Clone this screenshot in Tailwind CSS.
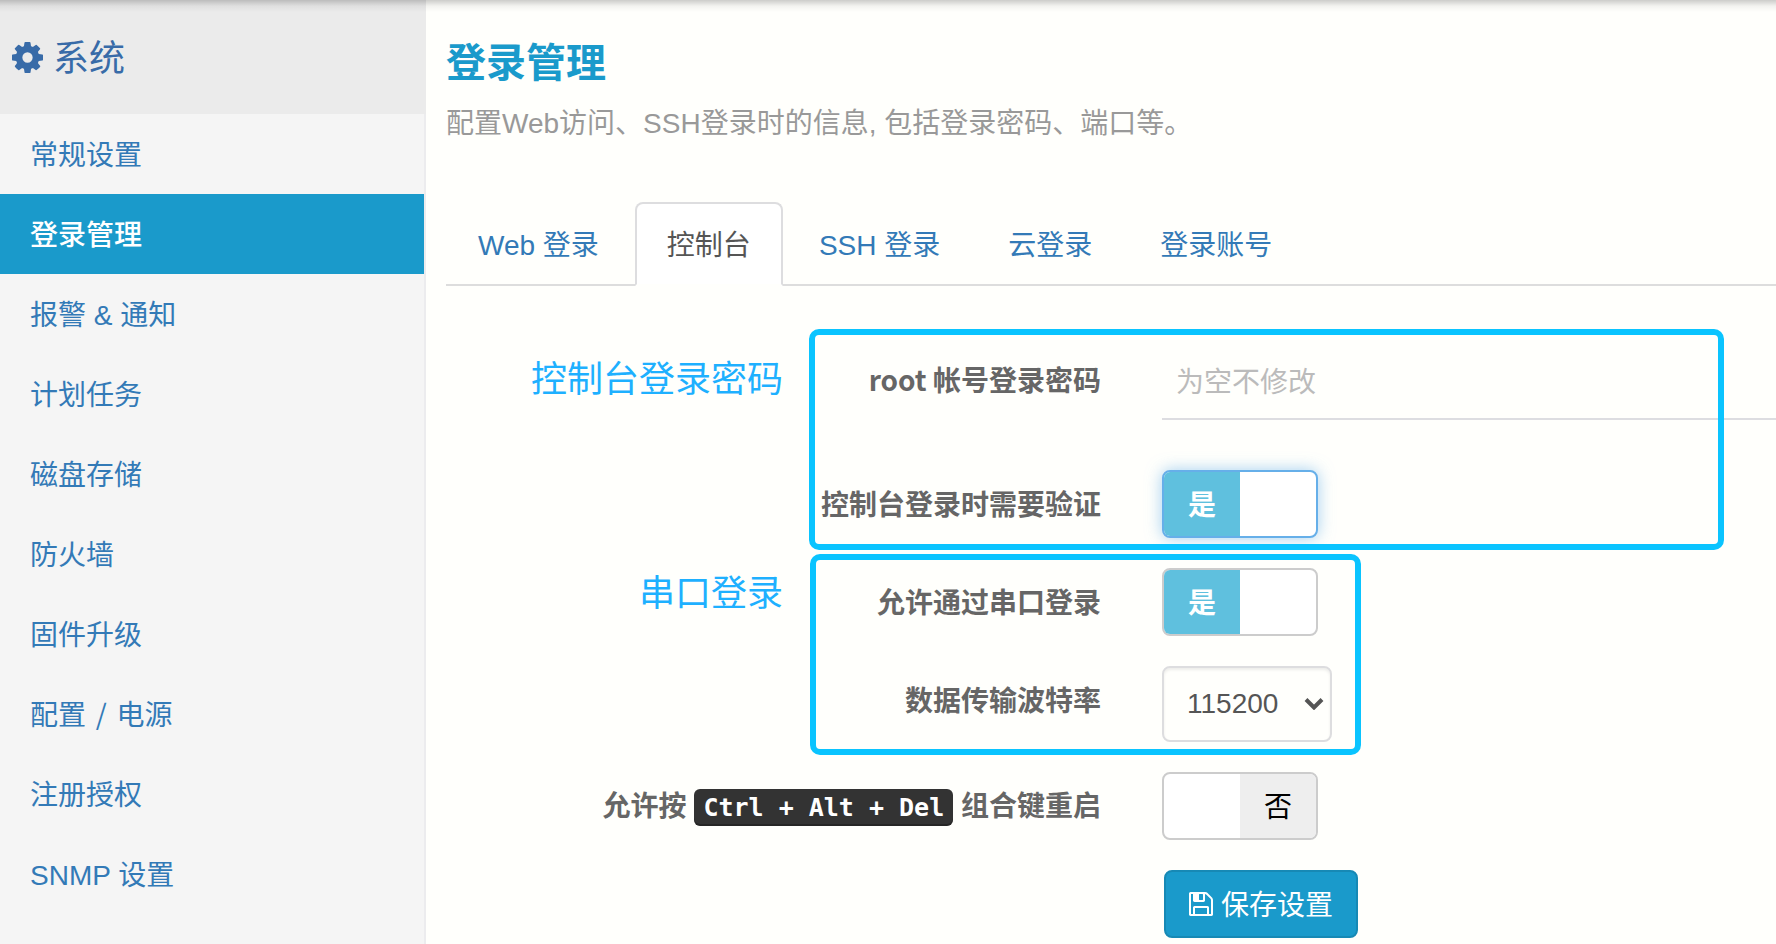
<!DOCTYPE html>
<html lang="zh-CN">
<head>
<meta charset="utf-8">
<title>登录管理</title>
<script src="https://cdn.jsdelivr.net/npm/@tailwindcss/browser@4"></script>
</head>
<body class="relative flex min-h-screen overflow-x-hidden bg-[#fffffc] font-['Liberation_Sans','Noto_Sans_CJK_SC',sans-serif] text-[28px] leading-10 text-[#555]">
<div class="pointer-events-none absolute inset-x-0 top-0 z-10 h-3 bg-linear-to-b from-black/20 via-black/5 to-transparent"></div>

<aside class="w-[426px] shrink-0 border-r-2 border-[#ececee] bg-[#f5f5f5]">
  <h2 class="-mr-0.5 flex h-[114px] items-center gap-2.5 bg-[#ebebeb] pl-3 text-4xl text-[#386ba8]">
    <svg class="size-[31px] fill-current" viewBox="0 -128 1536 1536" aria-hidden="true"><path d="M1024 640q0-106-75-181t-181-75-181 75-75 181 75 181 181 75 181-75 75-181zm512-109v222q0 12-8 23t-20 13l-185 28q-19 54-39 91 35 50 107 138 10 12 10 25t-9 23q-27 37-99 108t-94 71q-12 0-26-9l-138-108q-44 23-91 38-16 136-29 186-7 28-36 28h-222q-14 0-24.500-8.500t-11.500-21.500l-28-184q-49-16-90-37l-141 107q-10 9-25 9-14 0-25-11-126-114-165-168-7-10-7-23 0-12 8-23 15-21 51-66.500t54-70.500q-27-50-41-99l-183-27q-13-2-21-12.500t-8-23.500v-222q0-12 8-23t19-13l186-28q14-46 39-92-40-57-107-138-10-12-10-24 0-10 9-23 26-36 98.500-107.500t94.500-71.500q13 0 26 10l138 107q44-23 91-38 16-136 29-186 7-28 36-28h222q14 0 24.500 8.500t11.500 21.500l28 184q49 16 90 37l142-107q9-9 24-9 13 0 25 10 129 119 165 170 7 8 7 22 0 12-8 23-15 21-51 66.500t-54 70.500q26 50 41 98l183 28q13 2 21 12.500t8 23.500z"/></svg>
    <span class="pt-1">系统</span>
  </h2>
  <nav class="flex flex-col text-[#337ab7]" aria-label="系统">
    <a href="#" class="px-[30px] pt-[22px] pb-[18px]">常规设置</a>
    <a href="#" class="bg-[#1a9acb] px-[30px] pt-[22px] pb-[18px] font-medium text-white" aria-current="page">登录管理</a>
    <a href="#" class="px-[30px] pt-[22px] pb-[18px]">报警 &amp; 通知</a>
    <a href="#" class="px-[30px] pt-[22px] pb-[18px]">计划任务</a>
    <a href="#" class="px-[30px] pt-[22px] pb-[18px]">磁盘存储</a>
    <a href="#" class="px-[30px] pt-[22px] pb-[18px]">防火墙</a>
    <a href="#" class="px-[30px] pt-[22px] pb-[18px]">固件升级</a>
    <a href="#" class="px-[30px] pt-[22px] pb-[18px]">配置 <span class="px-0.5 font-['Noto_Sans_CJK_SC',sans-serif] leading-none">/</span> 电源</a>
    <a href="#" class="px-[30px] pt-[22px] pb-[18px]">注册授权</a>
    <a href="#" class="px-[30px] pt-[22px] pb-[18px]">SNMP 设置</a>
  </nav>
</aside>

<main class="min-w-0 flex-1 pl-5">
  <h1 class="pt-[33px] text-[40px] leading-[60px] font-bold text-[#1a9acb]">登录管理</h1>
  <p class="mt-[11px] text-[#999]">配置Web访问、SSH登录时的信息, 包括登录密码、端口等。</p>

  <nav class="mt-[58px] flex gap-1 border-b-2 border-[#ddd] text-[#337ab7]" aria-label="登录方式">
    <a href="#" class="-mb-0.5 border-2 border-transparent px-[30px] pt-[22px] pb-[18px]">Web 登录</a>
    <a href="#" class="-mb-0.5 rounded-t-lg border-2 border-[#dddddf] border-b-[#fffffc] bg-white px-[30px] pt-[22px] pb-[18px] text-[#555]" aria-current="page">控制台</a>
    <a href="#" class="-mb-0.5 border-2 border-transparent px-[30px] pt-[22px] pb-[18px]">SSH 登录</a>
    <a href="#" class="-mb-0.5 border-2 border-transparent px-[30px] pt-[22px] pb-[18px]">云登录</a>
    <a href="#" class="-mb-0.5 border-2 border-transparent px-[30px] pt-[22px] pb-[18px]">登录账号</a>
  </nav>

  <form class="flex flex-col gap-[30px] pt-[58px]">
    <section class="relative flex flex-col gap-[50px]">
      <div class="grid grid-cols-[655px_1fr] gap-x-[61px]">
        <label for="pwd" class="pt-[15px] text-right font-['Noto_Sans_CJK_SC',sans-serif] font-bold text-[#666]">root 帐号登录密码</label>
        <input id="pwd" type="password" placeholder="为空不修改" class="h-[76px] w-full border-b-2 border-[#dddde1] bg-transparent px-3.5 pt-1 outline-none placeholder:text-[#bbb]">
      </div>
      <div class="grid grid-cols-[655px_1fr] gap-x-[61px]">
        <label for="auth" class="pt-4 text-right font-bold text-[#666]">控制台登录时需要验证</label>
        <label class="relative flex h-[68px] w-[156px] overflow-hidden rounded-lg border-2 border-[#66afe9] bg-white shadow-[0_0_16px_rgba(102,175,233,0.6)]">
          <input id="auth" type="checkbox" role="switch" checked class="sr-only">
          <span class="flex w-1/2 items-center justify-center bg-[#5fc0de] pt-1 font-bold text-white">是</span>
        </label>
      </div>
      <div class="pointer-events-none absolute -top-[15px] -bottom-3 left-[363px] w-[915px] rounded-[10px] border-6 border-[#0ac4ff]"></div>
      <p class="absolute top-3.5 right-full -mr-[337px] text-4xl leading-[44px] whitespace-nowrap text-[#1eb0ff]">控制台登录密码</p>
    </section>

    <section class="relative flex flex-col gap-[30px]">
      <div class="grid grid-cols-[655px_1fr] gap-x-[61px]">
        <label for="serial" class="pt-4 text-right font-bold text-[#666]">允许通过串口登录</label>
        <label class="relative flex h-[68px] w-[156px] overflow-hidden rounded-lg border-2 border-[#ccc] bg-white">
          <input id="serial" type="checkbox" role="switch" checked class="sr-only">
          <span class="flex w-1/2 items-center justify-center bg-[#5fc0de] pt-1 font-bold text-white">是</span>
        </label>
      </div>
      <div class="grid grid-cols-[655px_1fr] gap-x-[61px]">
        <label for="baud" class="pt-4 text-right font-bold text-[#666]">数据传输波特率</label>
        <div class="relative w-[170px]">
          <select id="baud" class="h-[76px] w-full appearance-none rounded-lg border-2 border-[#dddddf] bg-transparent pl-[23px] shadow-[inset_0_2px_3px_rgba(0,0,0,0.075)] outline-none">
            <option>115200</option>
          </select>
          <svg class="pointer-events-none absolute top-8 right-2 h-3 w-5 fill-none stroke-[#555] stroke-4" viewBox="0 0 20 12" aria-hidden="true"><path d="M2 1.500L10 9.500L18 1.500"/></svg>
        </div>
      </div>
      <div class="pointer-events-none absolute -top-3.5 -bottom-[13px] left-[364px] w-[551px] rounded-[10px] border-6 border-[#0ac4ff]"></div>
      <p class="absolute top-1 right-full -mr-[337px] text-4xl leading-[44px] whitespace-nowrap text-[#1eb0ff]">串口登录</p>
    </section>

    <div class="grid grid-cols-[655px_1fr] gap-x-[61px]">
      <label for="cad" class="pt-[15px] text-right font-bold text-[#666]">允许按 <kbd class="rounded-md bg-[#333] px-[9px] py-1 font-['DejaVu_Sans_Mono',monospace] text-[25px] font-bold text-white shadow-[inset_0_-2px_0_rgba(0,0,0,0.25)]">Ctrl + Alt + Del</kbd> 组合键重启</label>
      <label class="relative flex h-[68px] w-[156px] justify-end overflow-hidden rounded-lg border-2 border-[#ccc] bg-white">
        <input id="cad" type="checkbox" role="switch" class="sr-only">
        <span class="flex w-1/2 items-center justify-center bg-[#eee] pt-1 text-black">否</span>
      </label>
    </div>

    <div class="grid grid-cols-[655px_1fr] gap-x-[61px]">
      <button type="submit" class="col-start-2 ml-0.5 flex h-[68px] w-[194px] items-center justify-center gap-2 rounded-lg border-2 border-[#1789b5] bg-[#1a9acb] text-white">
        <svg class="size-6 fill-current" viewBox="0 128 1536 1536" aria-hidden="true"><path d="M384 1536h768v-384h-768v384zm896 0h128v-896q0-14-10-38.500t-20-34.500l-281-281q-10-10-34-20t-39-10v416q0 40-28 68t-68 28h-576q-40 0-68-28t-28-68v-416h-128v1280h128v-416q0-40 28-68t68-28h832q40 0 68 28t28 68v416zm-384-928v-320q0-13-9.500-22.500t-22.500-9.500h-192q-13 0-22.500 9.500t-9.500 22.500v320q0 13 9.500 22.500t22.500 9.500h192q13 0 22.500-9.500t9.500-22.500zm640 32v928q0 40-28 68t-68 28h-1344q-40 0-68-28t-28-68v-1344q0-40 28-68t68-28h928q40 0 88 20t76 48l280 280q28 28 48 76t20 88z"/></svg>
        <span class="pt-[3px]">保存设置</span>
      </button>
    </div>
  </form>
</main>
</body>
</html>
